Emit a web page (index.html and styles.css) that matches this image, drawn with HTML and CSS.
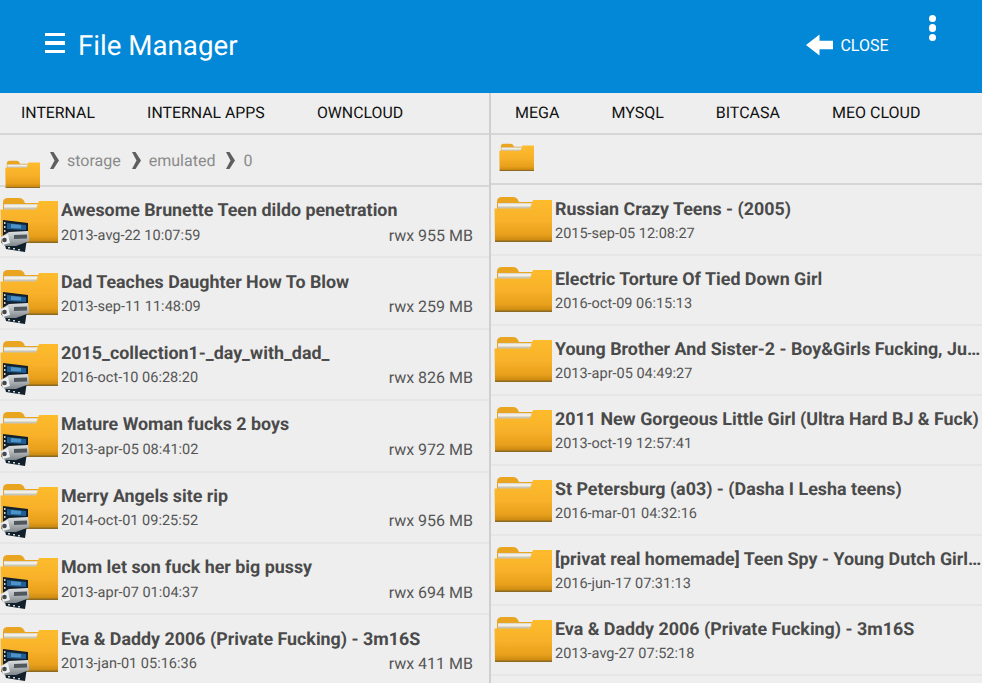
FILE: index.html
```html
<!DOCTYPE html>
<html lang="en">
<head>
<meta charset="utf-8">
<title>File Manager</title>
<link rel="stylesheet" href="styles.css">
</head>
<body>
<svg class="defs" width="0" height="0" aria-hidden="true">
  <defs>
    <linearGradient id="fg" x1="0" y1="0" x2="0" y2="1">
      <stop offset="0" stop-color="#fdbc2c"/>
      <stop offset=".5" stop-color="#f8b12a"/>
      <stop offset=".85" stop-color="#e89f1b"/>
      <stop offset="1" stop-color="#c5860f"/>
    </linearGradient>
    <linearGradient id="sv" x1="0" y1="0" x2="0" y2="1">
      <stop offset="0" stop-color="#dfe2e4"/>
      <stop offset="1" stop-color="#7f868b"/>
    </linearGradient>
    <symbol id="folder" viewBox="0 0 58 46">
      <path d="M3 5.500Q3 1 8 1H19Q23 1 24.500 5L25 6H52V30H3Z" fill="#e9a420"/>
      <path d="M4 7H38V14H4Z" fill="#c9c5b8"/>
      <path d="M4 7.500H38L37 10.500H4Z" fill="#f1efe8"/>
      <path d="M36 12.500L39 4H58V45H1L0.500 12.500Z" fill="url(#fg)"/>
      <path d="M1 44.500H58V46H1Z" fill="#8c6a24"/>
    </symbol>
    <symbol id="camera" viewBox="0 0 30 34">
      <path d="M3 1L28 4V13L25 33L6 30L3 18Z" fill="#12202c"/>
      <path d="M7 4L26 6V11L7 10Z" fill="#1f5f96"/>
      <path d="M11 5L21 6V9.500L11 9Z" fill="#4f93c6"/>
      <path d="M4 3H5.500V5H4ZM4 7H5.500V9H4ZM4 11H5.500V13H4ZM8 28H10V29.500H8ZM13 29H15V30.500H13ZM18 30H20V31.500H18Z" fill="#c9d3da"/>
      <path d="M1 18L9 13L28 12L29.500 22L16 27H5L2 25Z" fill="url(#sv)"/>
      <path d="M1 18L8 15L10 24L3 26Z" fill="#eceeef"/>
      <path d="M14 16L27 15.500V19.500L14 20Z" fill="#50575c"/>
      <circle cx="4.500" cy="21" r="2.300" fill="#41474c"/>
    </symbol>
    <symbol id="chev" viewBox="0 0 9 17">
      <path d="M0 0H3.500L9 8.500L3.500 17H0L4.500 8.500Z" fill="#5f5f5f"/>
    </symbol>
  </defs>
</svg>
<header class="appbar">
  <div class="brand">
    <span class="menu"><i></i><i></i><i></i></span>
    <h1 class="title">File Manager</h1>
  </div>
  <button class="close" type="button">
    <svg class="close-arrow" viewBox="0 0 28 22" aria-hidden="true"><path d="M0 11L14 0V6.500H28V15.500H14V22Z" fill="#fff"/></svg>
    <span>CLOSE</span>
  </button>
  <span class="more"><i></i><i></i><i></i></span>
</header>
<main class="panes">
  <section class="pane pane-left">
    <nav class="tabs">
      <span>INTERNAL</span><span>INTERNAL APPS</span><span>OWNCLOUD</span>
    </nav>
    <div class="crumbs">
      <svg class="crumb-folder"><use href="#folder"/></svg>
      <svg class="sep"><use href="#chev"/></svg><span class="crumb">storage</span>
      <svg class="sep"><use href="#chev"/></svg><span class="crumb">emulated</span>
      <svg class="sep"><use href="#chev"/></svg><span class="crumb">0</span>
    </div>
    <ul class="list">
      <li class="row"><span class="thumb"><svg class="folder"><use href="#folder"/></svg><svg class="cam"><use href="#camera"/></svg></span><div class="info"><div class="name">Awesome Brunette Teen dildo penetration</div><div class="meta"><span>2013-avg-22 10:07:59</span><span class="size">rwx 955 MB</span></div></div></li>
      <li class="row"><span class="thumb"><svg class="folder"><use href="#folder"/></svg><svg class="cam"><use href="#camera"/></svg></span><div class="info"><div class="name">Dad Teaches Daughter How To Blow</div><div class="meta"><span>2013-sep-11 11:48:09</span><span class="size">rwx 259 MB</span></div></div></li>
      <li class="row"><span class="thumb"><svg class="folder"><use href="#folder"/></svg><svg class="cam"><use href="#camera"/></svg></span><div class="info"><div class="name">2015_collection1-_day_with_dad_</div><div class="meta"><span>2016-oct-10 06:28:20</span><span class="size">rwx 826 MB</span></div></div></li>
      <li class="row"><span class="thumb"><svg class="folder"><use href="#folder"/></svg><svg class="cam"><use href="#camera"/></svg></span><div class="info"><div class="name">Mature Woman fucks 2 boys</div><div class="meta"><span>2013-apr-05 08:41:02</span><span class="size">rwx 972 MB</span></div></div></li>
      <li class="row"><span class="thumb"><svg class="folder"><use href="#folder"/></svg><svg class="cam"><use href="#camera"/></svg></span><div class="info"><div class="name">Merry Angels site rip</div><div class="meta"><span>2014-oct-01 09:25:52</span><span class="size">rwx 956 MB</span></div></div></li>
      <li class="row"><span class="thumb"><svg class="folder"><use href="#folder"/></svg><svg class="cam"><use href="#camera"/></svg></span><div class="info"><div class="name">Mom let son fuck her big pussy</div><div class="meta"><span>2013-apr-07 01:04:37</span><span class="size">rwx 694 MB</span></div></div></li>
      <li class="row"><span class="thumb"><svg class="folder"><use href="#folder"/></svg><svg class="cam"><use href="#camera"/></svg></span><div class="info"><div class="name">Eva &amp; Daddy 2006 (Private Fucking) - 3m16S</div><div class="meta"><span>2013-jan-01 05:16:36</span><span class="size">rwx 411 MB</span></div></div></li>
    </ul>
  </section>
  <section class="pane pane-right">
    <nav class="tabs">
      <span>MEGA</span><span>MYSQL</span><span>BITCASA</span><span>MEO CLOUD</span>
    </nav>
    <div class="crumbs">
      <svg class="crumb-folder"><use href="#folder"/></svg>
    </div>
    <ul class="list">
      <li class="row"><span class="thumb"><svg class="folder"><use href="#folder"/></svg></span><div class="info"><div class="name">Russian Crazy Teens - (2005)</div><div class="meta"><span>2015-sep-05 12:08:27</span></div></div></li>
      <li class="row"><span class="thumb"><svg class="folder"><use href="#folder"/></svg></span><div class="info"><div class="name">Electric Torture Of Tied Down Girl</div><div class="meta"><span>2016-oct-09 06:15:13</span></div></div></li>
      <li class="row"><span class="thumb"><svg class="folder"><use href="#folder"/></svg></span><div class="info"><div class="name">Young Brother And Sister-2 - Boy&amp;Girls Fucking, Just Fuck</div><div class="meta"><span>2013-apr-05 04:49:27</span></div></div></li>
      <li class="row"><span class="thumb"><svg class="folder"><use href="#folder"/></svg></span><div class="info"><div class="name">2011 New Gorgeous Little Girl (Ultra Hard BJ &amp; Fuck)</div><div class="meta"><span>2013-oct-19 12:57:41</span></div></div></li>
      <li class="row"><span class="thumb"><svg class="folder"><use href="#folder"/></svg></span><div class="info"><div class="name">St Petersburg (a03) - (Dasha I Lesha teens)</div><div class="meta"><span>2016-mar-01 04:32:16</span></div></div></li>
      <li class="row"><span class="thumb"><svg class="folder"><use href="#folder"/></svg></span><div class="info"><div class="name">[privat real homemade] Teen Spy - Young Dutch Girl Caught</div><div class="meta"><span>2016-jun-17 07:31:13</span></div></div></li>
      <li class="row"><span class="thumb"><svg class="folder"><use href="#folder"/></svg></span><div class="info"><div class="name">Eva &amp; Daddy 2006 (Private Fucking) - 3m16S</div><div class="meta"><span>2013-avg-27 07:52:18</span></div></div></li>
    </ul>
  </section>
</main>
</body>
</html>
```
FILE: styles.css
```css
* { box-sizing: border-box; }
html, body { margin: 0; height: 100%; overflow: hidden; }
body {
  font-family: Roboto, "Liberation Sans", sans-serif;
  background: #eeeeee;
  display: flex;
  flex-direction: column;
  height: 683px;
  text-rendering: geometricPrecision;
}
.defs { position: absolute; }
.appbar {
  height: 93px;
  flex: none;
  background: #0288d6;
  color: #fff;
  display: flex;
  align-items: flex-start;
  padding-left: 45px;
}
.brand { display: flex; align-items: center; gap: 14px; height: 90px; flex: 1; }
.menu { display: flex; flex-direction: column; gap: 5px; width: 20px; margin-top: -4px; }
.menu i { display: block; height: 3.500px; background: #fff; }
.title { margin: 2px 0 0 -1px; font-size: 27.700px; font-weight: 400; line-height: 34px; }
.close {
  display: flex;
  align-items: center;
  gap: 7px;
  height: 90px;
  padding: 0;
  margin-right: 40px;
  background: none;
  border: 0;
  color: #fff;
  font: 400 16px Roboto, sans-serif;
}
.close-arrow { width: 27px; height: 22px; }
.more { display: flex; flex-direction: column; gap: 2px; padding-top: 14.500px; margin-right: 46px; }
.more i { display: block; width: 7.500px; height: 7.500px; border-radius: 50%; background: #fff; }
.panes { flex: 1; display: flex; min-height: 0; }
.pane { min-width: 0; display: flex; flex-direction: column; }
.pane-left { width: 491px; flex: none; border-right: 2px solid #cfcfcf; }
.pane-right { flex: 1; }
.tabs {
  height: 42px;
  flex: none;
  display: flex;
  align-items: center;
  gap: 52.200px;
  padding: 0 21px 2px;
  border-bottom: 2px solid #d6d6d6;
  color: #111;
  font-size: 15.850px;
}
.pane-right .tabs { padding-left: 24px; gap: 52px; font-size: 16px; }
.crumbs {
  height: 52px;
  flex: none;
  display: flex;
  align-items: flex-start;
  padding: 14px 0 0 5px;
  color: #8a8a8a;
  font-size: 16px;
  line-height: 24px;
  border-bottom: 2px solid #d6d6d6;
}
.pane-right .crumbs { height: 50px; padding: 8px 0 0 8px; }
.crumb-folder { width: 35px; height: 28px; margin-top: 11px; flex: none; }
.pane-right .crumb-folder { margin-top: 0; }
.crumb { margin-right: 11px; }
.sep { width: 9px; height: 17px; margin: 3px 8px 0 0; flex: none; }
.crumb-folder + .sep { margin-left: 10px; }
.list { list-style: none; margin: 0; padding: 0; }
.row {
  height: 71.400px;
  display: flex;
  align-items: center;
  border-bottom: 2px solid #e6e6e6;
}
.pane-right .list { padding-top: 1px; }
.pane-right .row { height: 70px; }
.thumb { position: relative; width: 61px; height: 46px; flex: none; margin-top: -3px; }
.pane-right .thumb { width: 64px; padding-left: 3px; }
.folder { width: 58px; height: 46px; display: block; }
.cam { position: absolute; left: 0; top: 22px; width: 30px; height: 34px; }
.info { flex: 1; min-width: 0; padding: 2.500px 16px 0 0; }
.pane-right .info { padding: 2px 0 0; }
.name {
  color: #4a4a4a;
  font-size: 17.850px;
  font-weight: 700;
  line-height: 24px;
  white-space: nowrap;
  overflow: hidden;
  text-overflow: ellipsis;
}
.meta {
  display: flex;
  justify-content: space-between;
  color: #555;
  font-size: 14.500px;
  line-height: 22px;
  margin-top: 1.500px;
}
.pane-right .meta { margin-top: 1px; }
.size { font-size: 16px; }
```
